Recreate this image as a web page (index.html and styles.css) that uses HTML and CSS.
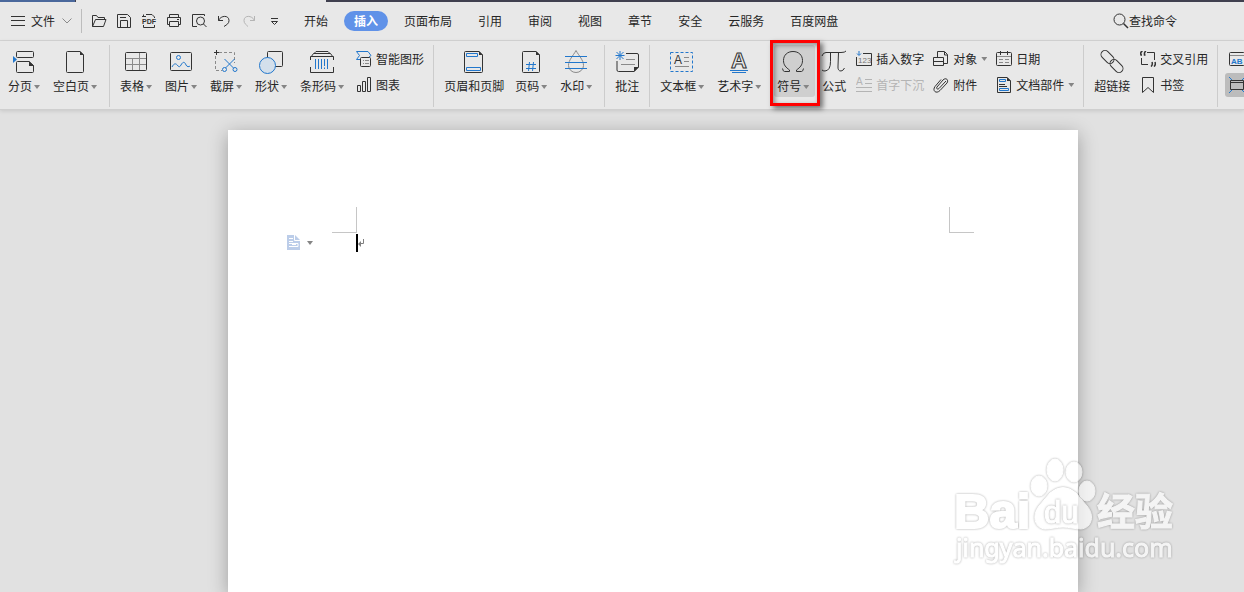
FILE: index.html
```
<!DOCTYPE html>
<html lang="zh-CN">
   <head>
      <meta charset="UTF-8">
      <meta name="viewport" content="width=device-width, initial-scale=1.0"/>
      <title>文字文稿</title>
      <link rel="stylesheet" href="styles.css">
   </head>
   <body>

      <div class="doc-tabs">
         <div class="doc-tab-home"></div>
         <div class="doc-tab-active"></div>
      </div>

      <header class="menu-bar">
         <button class="file-menu">
            <svg width="14" height="12" viewBox="0 0 14 12"><path class="ln" d="M0 1.5h14M0 5.5h14M0 10.5h14"/></svg>
            文件
            <svg class="chevron" width="10" height="6" viewBox="0 0 10 6"><path class="ln gray" d="M.5.5L5 5 9.500.5"/></svg>
         </button>

         <div class="quick-tools">
            <button aria-label="打开"><svg width="16" height="16" viewBox="0 0 16 16"><path class="ln" d="M1.500 13.500V2.500h4l1.500 2h6.500v2M1.500 13.500L4.500 6.500h10.500L12.500 13.500z"/></svg></button>
            <button aria-label="保存"><svg width="16" height="16" viewBox="0 0 16 16"><path class="ln" d="M1.500 1.500h10l3 3v10h-13zM4.500 14V7.500h7V14M4 4.500h6"/></svg></button>
            <button aria-label="输出为PDF"><svg width="16" height="16" viewBox="0 0 16 16"><path class="ln" d="M2.500 4V1.500M1 3.500h4M5 1.500h6l2.500 2.500v1M2.500 12v2.500h11V12"/><text class="glyph" x="1" y="11" font-size="7" font-weight="bold">PDF</text></svg></button>
            <button aria-label="打印"><svg width="16" height="16" viewBox="0 0 16 16"><path class="ln" d="M3.500 4.500v-3h9v3M3.500 11.500h-2v-7h13v7h-2M3.500 8.500h9v5h-9zM11 6.500h2"/></svg></button>
            <button aria-label="打印预览"><svg width="16" height="16" viewBox="0 0 16 16"><path class="ln" d="M13.500 3V1.500h-12v12H6"/><circle class="ln" cx="9.500" cy="8" r="4"/><path class="ln" d="M12.500 11l3 3"/></svg></button>
            <button aria-label="撤销"><svg width="16" height="16" viewBox="0 0 16 16"><path class="ln" d="M2.500 3v4.500H7M2.500 7.500C5 2 13 2 13 7.500c0 3-2 4-5 6"/></svg></button>
            <button aria-label="恢复"><svg width="16" height="16" viewBox="0 0 16 16"><path class="ln pale" d="M13.500 3v4.500H9M13.500 7.500C11 2 3 2 3 7.500c0 3 2 4 4 6"/></svg></button>
            <button aria-label="自定义快速访问工具栏"><svg width="16" height="16" viewBox="0 0 16 16"><path class="ln" d="M5 5.500h7M5.500 8.500l3 3 3-3z"/></svg></button>
         </div>

         <nav class="ribbon-tabs">
            <a href="#">开始</a>
            <a href="#" class="active">插入</a>
            <a href="#">页面布局</a>
            <a href="#">引用</a>
            <a href="#">审阅</a>
            <a href="#">视图</a>
            <a href="#">章节</a>
            <a href="#">安全</a>
            <a href="#">云服务</a>
            <a href="#">百度网盘</a>
         </nav>

         <button class="search">
            <svg width="16" height="16" viewBox="0 0 16 16"><circle class="ln" cx="6.500" cy="6.500" r="5.500"/><path class="ln thick" d="M10.500 10.500l4.500 4.500"/></svg>查找命令
         </button>
      </header>

      <div class="ribbon">
         <div class="group first">
            <button class="big">
               <svg width="26" height="26" viewBox="0 0 26 26"><rect class="ln" x="5.500" y="2.500" width="17" height="6" rx="1"/><path class="ln" d="M18 12.500H6.500q-1 0-1 1v9q0 1 1 1h15q1 0 1-1v-6z"/><path class="ink" d="M18 12l5 5h-5z"/><path class="blue-fill" d="M2 7l4 3.500L2 14z"/></svg>
               <span>分页<i class="arrow"></i></span>
            </button>
            <button class="big">
               <svg width="26" height="26" viewBox="0 0 26 26"><path class="ln" d="M18 2.500H5.500q-1 0-1 1v19q0 1 1 1h15q1 0 1-1V6z"/><path class="ink" d="M18 2l4 4h-4z"/></svg>
               <span>空白页<i class="arrow"></i></span>
            </button>
         </div>

         <div class="group">
            <button class="big">
               <svg width="26" height="26" viewBox="0 0 26 26"><path class="ln gray" d="M3 9.500h20M3 15.500h20M9.500 9.500v12M16.500 4v5M16.500 15.500v6M16.500 9v6"/><rect class="ln" x="2.500" y="3.500" width="21" height="18" rx="1"/></svg>
               <span>表格<i class="arrow"></i></span>
            </button>
            <button class="big">
               <svg width="26" height="26" viewBox="0 0 26 26"><rect class="ln" x="2.500" y="3.500" width="21" height="18" rx="1"/><circle class="ln blue" cx="10.500" cy="8.500" r="2"/><path class="ln blue" d="M4 18c2-4 4-4 6-1 1 1 2 1 3-1 2-4 4-3 5 0 1 2 3 2 4 1"/></svg>
               <span>图片<i class="arrow"></i></span>
            </button>
            <button class="big">
               <svg width="26" height="26" viewBox="0 0 26 26"><path class="ln gray dash" d="M6 3.500h15.500V14M2.500 7v14.500H9"/><path class="ln" d="M3.500 1v5M1 3.500h5"/><path class="ln blue" d="M11.500 10l9 9M21.500 10l-9 9"/><circle class="ln blue" cx="11.500" cy="20.500" r="2"/><circle class="ln blue" cx="22" cy="20.500" r="2"/></svg>
               <span>截屏<i class="arrow"></i></span>
            </button>
            <button class="big">
               <svg width="26" height="26" viewBox="0 0 26 26"><rect class="ln" x="9.500" y="2.500" width="15" height="15" rx="1"/><circle class="ln blue tint" cx="9.500" cy="16.500" r="8"/></svg>
               <span>形状<i class="arrow"></i></span>
            </button>
            <button class="big">
               <svg width="26" height="26" viewBox="0 0 26 26"><path class="ln" d="M2 8l2.500-3.500h17L24 8M5 4.500l2-2h12l2 2M1.500 11V7.500h23V11M1.500 18v5.500h23V18"/><path class="ln blue" d="M6.500 10v10M9.500 10v10M12.500 10v10M15.500 10v7M18.500 10v10M15.500 18.500v1.500"/></svg>
               <span>条形码<i class="arrow"></i></span>
            </button>
            <div class="stack">
               <button class="small">
                  <svg width="16" height="16" viewBox="0 0 16 16"><path class="ln blue" d="M4 8.500H.5L3.500 4.500.5.500H12L15 4.500 13 6"/><rect class="ln" x="4.500" y="6.500" width="10" height="9" rx="1"/><path class="ln gray" d="M7 9.500h1M9 9.500h4M7 12.500h1M9 12.500h4"/></svg>
                  智能图形
               </button>
               <button class="small">
                  <svg width="16" height="16" viewBox="0 0 16 16"><path class="ln" d="M1.500 8.500h3v6h-3zM6.500 4.500h3v10h-3zM11.500 .5h3v14h-3z"/></svg>
                  图表
               </button>
            </div>
         </div>

         <div class="group">
            <button class="big plain">
               <svg width="26" height="26" viewBox="0 0 26 26"><path class="ln" d="M18 2.500H4.500q-1 0-1 1v19q0 1 1 1h16q1 0 1-1V6z"/><path class="ink" d="M18 2l4 4h-4z"/><path class="ln blue" d="M5.500 4.500h11v3h-11zM5.500 18.500h14v3h-14z"/></svg>
               <span>页眉和页脚</span>
            </button>
            <button class="big">
               <svg width="26" height="26" viewBox="0 0 26 26"><path class="ln" d="M18 2.500H5.500q-1 0-1 1v19q0 1 1 1h15q1 0 1-1V6z"/><path class="ink" d="M18 2l4 4h-4z"/><path class="ln blue" d="M8 15.500h10M8 19.500h10M11.500 13l-1 9M15.500 13l-1 9"/></svg>
               <span>页码<i class="arrow"></i></span>
            </button>
            <button class="big">
               <svg width="26" height="26" viewBox="0 0 26 26"><path class="ln gray" d="M13 1.500C10 7 5.500 11 5.500 16.500a7.500 7 0 0 0 15 0C20.500 11 16 7 13 1.500z"/><path class="ln blue" d="M2 7.500h22M2 13.500h22M2 19.500h22"/></svg>
               <span>水印<i class="arrow"></i></span>
            </button>
         </div>

         <div class="group">
            <button class="big plain">
               <svg width="26" height="26" viewBox="0 0 26 26"><path class="ln" d="M12 4.500h11q1.500 0 1.500 1.500v12L20 22.500H4.500q-1.500 0-1.500-1.500V12"/><path class="ink" d="M25 18l-5 5v-5z"/><path class="ln gray" d="M12 10.500h9M7 15.500h14"/><path class="ln blue" d="M6 2v9M1.500 6.500h9M2.500 3l7 7M9.500 3l-7 7"/></svg>
               <span>批注</span>
            </button>
         </div>

         <div class="group">
            <button class="big">
               <svg width="26" height="26" viewBox="0 0 26 26"><rect class="ln blue dash" x="1.500" y="3.500" width="22" height="19"/><text class="glyph" x="5" y="15" font-size="12">A</text><path class="ln gray" d="M15 8.500h5M15 12.500h5M6 17.500h14"/></svg>
               <span>文本框<i class="arrow"></i></span>
            </button>
            <button class="big">
               <svg width="26" height="26" viewBox="0 0 26 26"><text class="outline" x="13" y="19" font-size="22" text-anchor="middle">A</text><path class="ln blue" d="M4 21.500h18M6 23.500h14"/></svg>
               <span>艺术字<i class="arrow"></i></span>
            </button>
            <div class="callout">
               <button class="big">
                  <svg width="26" height="26" viewBox="0 0 26 26"><path class="ln" d="M2.500 19.500q.5 3 2 3h5V21C6 18.500 3.500 16 3.500 11.500 3.500 6 7.500 2.500 13 2.500s9.500 3.500 9.500 9c0 4.500-2.500 7-6 9.500v1.500h5q1.500 0 2-3"/></svg>
                  <span>符号<i class="arrow"></i></span>
               </button>
            </div>
            <button class="big plain">
               <svg width="26" height="26" viewBox="0 0 26 26"><path class="ln" d="M1 7q1-3.500 4-3.500h15q4 0 5-1.500M9.500 3.500v9q0 9-5.500 9.500-2 0-3-1M17.500 3.500L17 17q-.5 5 3 5 2 0 3.500-3"/></svg>
               <span>公式</span>
            </button>
            <div class="stack">
               <button class="small">
                  <svg width="16" height="16" viewBox="0 0 16 16"><path class="ln" d="M7 2.500h8.500v12H.5V6"/><text class="glyph gray-text" x="2" y="12" font-size="8">123</text><path class="ln blue" d="M3 0v4M1 2.500l2 2 2-2"/></svg>
                  插入数字
               </button>
               <button class="small" disabled>
                  <svg width="16" height="16" viewBox="0 0 16 16"><text class="glyph pale-text" x="0" y="8" font-size="10">A</text><path class="ln pale" d="M9 2.500h7M9 6.500h7M0 10.500h16M0 14.500h16"/></svg>
                  首字下沉
               </button>
            </div>
            <div class="stack">
               <button class="small">
                  <svg width="16" height="16" viewBox="0 0 16 16"><path class="ln" d="M4.500 6V.5h7l3 3v9H11M.5 6.500h10v8H.5zM.5 10.500h10M11.500 1v3h3"/></svg>
                  对象<i class="arrow"></i>
               </button>
               <button class="small">
                  <svg width="16" height="16" viewBox="0 0 16 16"><path class="ln" d="M13 4L6 11.500c-2 1.500-3-.5-2-1.500l6-7c3-3 6 0 4 3l-7 7.500c-4 4-8 0-5-4l6-7"/></svg>
                  附件
               </button>
            </div>
            <div class="stack">
               <button class="small">
                  <svg width="16" height="16" viewBox="0 0 16 16"><rect class="ln" x=".5" y="1.500" width="15" height="13" rx="1"/><path class="ln" d="M4.500 0v4M11.500 0v4"/><path class="ln gray" d="M3 8.500h4M9 8.500h4M3 11.500h4M9 11.500h4M1 5.500h14"/></svg>
                  日期
               </button>
               <button class="small">
                  <svg width="16" height="16" viewBox="0 0 16 16"><path class="ln" d="M11 .5H1.500v15h13V4zM3 7.500h6M3 9.500h8"/><path class="ink" d="M11 0l4 4h-4z"/><path class="ln blue" d="M3.500 2.500h6v2h-6zM3.500 11.500h9v2h-9z"/></svg>
                  文档部件<i class="arrow"></i>
               </button>
            </div>
         </div>

         <div class="group">
            <button class="big plain">
               <svg width="26" height="26" viewBox="0 0 26 26"><rect class="ln" x="-7.500" y="-4" width="15" height="8" rx="4" transform="translate(8.500 8) rotate(45)"/><rect class="ln" x="-7.500" y="-4" width="15" height="8" rx="4" transform="translate(17.500 17) rotate(45)"/></svg>
               <span>超链接</span>
            </button>
            <div class="stack">
               <button class="small">
                  <svg width="16" height="16" viewBox="0 0 16 16"><path class="ln" d="M7 1.500h7.500V9M1.500 7v6.500H8"/><path class="ln thick" d="M2.500 0Q0 1 1 4h1M6 0Q4 1 4.500 4h1M12 11q1 3-1 4.500M15 11q1 3-1 4.500"/></svg>
                  交叉引用
               </button>
               <button class="small">
                  <svg width="16" height="16" viewBox="0 0 16 16"><path class="ln" d="M2.500.5h11v15L8 10.500l-5.500 5z"/></svg>
                  书签
               </button>
            </div>
         </div>

         <div class="group">
            <div class="stack toggles">
               <button class="toggle" aria-label="域">
                  <svg width="16" height="16" viewBox="0 0 16 16"><rect class="ln" x=".5" y="1.500" width="15" height="13" rx="1"/><path class="ln gray" d="M1 4.500h14"/><text class="glyph blue-text" x="2" y="13" font-size="8" font-weight="bold">AB</text></svg>
               </button>
               <button class="toggle on" aria-label="窗体底纹">
                  <svg width="16" height="16" viewBox="0 0 16 16"><path class="ln blue" d="M0 0l3 3M16 0l-3 3M0 16l3-3M16 16l-3-3"/><path class="ln" d="M1.500 3.500h13v9h-13zM1.500 5.500h13"/></svg>
               </button>
            </div>
         </div>
      </div>

      <main class="workspace">
         <div class="page">
            <div class="crop-marks">
               <div class="crop crop-left"></div>
               <div class="crop crop-right"></div>
            </div>
            <div class="line">
               <svg width="13" height="16" viewBox="0 0 13 16"><path fill="#bccde9" d="M0 0h8l5 5v10H0z"/><path fill="none" stroke="#fff" d="M7.500 0v5.500H13M2 3.500h4M2 6.500h4M2 8.500h9v3H4M2 11.500h2M5 9.500h4"/></svg>
               <i class="arrow"></i>
               <div class="caret"></div>
               <svg width="7" height="8" viewBox="0 0 7 8"><path fill="#808080" d="M0 5l3-3v6z"/><path fill="none" stroke="#808080" d="M5.500 0v4.500H2"/></svg>
            </div>
         </div>
      </main>

      <svg class="watermark" width="226" height="112" viewBox="0 0 226 112">
         <text class="wm wm-bold" x="2" y="72" font-size="49">Bai</text>
         <g class="wm">
            <ellipse cx="87" cy="30" rx="8" ry="10"/>
            <ellipse cx="103" cy="14" rx="8" ry="11"/>
            <ellipse cx="122" cy="16" rx="8" ry="10"/>
            <ellipse cx="135" cy="35" rx="8" ry="10"/>
            <path d="M98 37q13-11 26 0l11 13c8 9 5 22-6 23-6 0-12-2-18-2s-12 2-18 2c-11-1-13-14-6-23z"/>
         </g>
         <text class="wm wm-du" x="92" y="67" font-size="31">du</text>
         <text class="wm wm-cjk" x="145" y="69" font-size="38">经验</text>
         <text class="wm wm-url" x="4" y="101" font-size="25">jingyan.baidu.com</text>
      </svg>

   </body>
</html>
```
FILE: styles.css
```
*
{
   box-sizing: border-box;
}

body
{
   display: flex;
   flex-direction: column;
   position: relative;
   height: 100vh;
   margin: 0;
   overflow: hidden;
   background: #e1e1e1;
   color: #262626;
   font-family: "Noto Sans CJK SC", sans-serif;
   font-size: 12px;
   line-height: 16px;
}

button
{
   display: flex;
   align-items: center;
   flex: none;
   padding: 0;
   border: 0;
   background: none;
   color: inherit;
   font: inherit;
   white-space: nowrap;
}

button:disabled
{
   color: #b4b4b4;
}

svg
{
   display: block;
   flex: none;
}

/* icon strokes */

.ln
{
   fill: none;
   stroke: #333333;
}

.ln.blue
{
   stroke: #2277cc;
}

.ln.gray
{
   stroke: #8a8a8a;
}

.ln.pale
{
   stroke: #b4b4b4;
}

.ln.thick
{
   stroke-width: 1.5;
}

.ln.dash
{
   stroke-dasharray: 3 2;
}

.ln.tint
{
   fill: #d3dfeb;
}

.ink
{
   fill: #333333;
}

.blue-fill
{
   fill: #2277cc;
}

.glyph
{
   fill: #333333;
   font-family: "Liberation Sans", sans-serif;
}

.gray-text
{
   fill: #777777;
}

.pale-text
{
   fill: #b4b4b4;
}

.blue-text
{
   fill: #2277cc;
}

.outline
{
   fill: none;
   stroke: #333333;
   font-family: "Liberation Sans", sans-serif;
   font-weight: bold;
}

.arrow
{
   display: inline-block;
   flex: none;
   width: 6px;
   height: 4px;
   background: #858585;
   clip-path: polygon(0 0, 100% 0, 50% 100%);
}

/* window top */

.doc-tabs
{
   display: flex;
   flex: none;
   height: 2px;
   background: #40404f;
}

.doc-tab-home
{
   width: 75px;
   background: #4a689c;
}

.doc-tab-active
{
   width: 250px;
   margin-left: 1px;
   background: #e8e8e8;
}

.menu-bar
{
   display: flex;
   align-items: center;
   flex: none;
   height: 39px;
   padding-left: 11px;
   border-bottom: 1px solid #d5d5d5;
   background: #e8e8e8;
}

.file-menu
{
   gap: 6px;
   height: 24px;
   padding-right: 9px;
   border-right: 1px solid #bcbcbc;
}

.chevron
{
   margin-left: 1px;
}

.quick-tools
{
   display: flex;
   flex: none;
   margin-left: 4px;
}

.quick-tools button
{
   justify-content: center;
   width: 25px;
   height: 24px;
}

.ribbon-tabs
{
   display: flex;
   flex: none;
   margin-left: 5px;
}

.ribbon-tabs a
{
   margin: 0 3px;
   padding: 2px 10px;
   border-radius: 10px;
   color: inherit;
   text-decoration: none;
}

.ribbon-tabs .active
{
   background: #6092e8;
   color: #ffffff;
   font-weight: bold;
}

.search
{
   margin-left: auto;
   margin-right: 67px;
}

/* ribbon */

.ribbon
{
   display: flex;
   flex: none;
   height: 69px;
   padding: 4px 0 2px;
   border-bottom: 1px solid #cfcfcf;
   background: #e8e8e8;
   box-shadow: 0 1px 4px rgba(0, 0, 0, 0.12);
}

.group
{
   display: flex;
   align-items: flex-start;
   flex: none;
   padding: 0 6px 0 3px;
   border-right: 1px solid #cccccc;
}

.group.first
{
   padding-left: 1px;
}

.group:last-child
{
   border-right: 0;
}

.big
{
   flex-direction: column;
   gap: 3px;
   height: 52px;
   padding: 4px 6px 0 7px;
}

.big.plain
{
   padding-right: 4px;
}

.big.plain svg
{
   margin: 0 -1px;
}

.big .arrow
{
   margin-left: 2px;
   vertical-align: 2px;
}

.stack
{
   display: flex;
   flex-direction: column;
   gap: 2px;
   padding: 2px 3px 0 6px;
}

.small
{
   gap: 4px;
   height: 24px;
}

.toggles
{
   padding-left: 4px;
}

.toggle
{
   width: 24px;
   height: 24px;
   padding: 4px;
   border-radius: 3px;
}

.toggle.on
{
   background: #bcbcbc;
}

.callout
{
   position: relative;
   margin-left: 7px;
}

.callout .big
{
   padding-left: 3px;
   border-radius: 3px;
   background: #cfcfcf;
}

.callout::after
{
   content: "";
   position: absolute;
   inset: -5px -5px -9px -4px;
   border: 3px solid #ff0000;
   box-shadow: 3px 3px 5px rgba(0, 0, 0, 0.5), inset 2px 2px 5px rgba(0, 0, 0, 0.4);
}

/* document */

.workspace
{
   display: flex;
   flex: 1;
   padding: 20px 20px 0 228px;
}

.page
{
   flex: 1;
   max-width: 850px;
   padding-top: 77px;
   background: #ffffff;
   box-shadow: 0 4px 18px rgba(0, 0, 0, 0.3);
}

.crop-marks
{
   display: flex;
   justify-content: space-between;
   padding: 0 104px;
}

.crop
{
   width: 25px;
   height: 26px;
   border-bottom: 1px solid #c6c6c6;
}

.crop-left
{
   border-right: 1px solid #c6c6c6;
}

.crop-right
{
   border-left: 1px solid #c6c6c6;
}

.line
{
   display: flex;
   align-items: center;
   margin-top: 1px;
   padding-left: 59px;
}

.line .arrow
{
   margin-left: 7px;
}

.caret
{
   width: 2px;
   height: 18px;
   margin-left: 43px;
   background: #000000;
}

/* site watermark, floats over the document */

.watermark
{
   position: absolute;
   right: 66px;
   bottom: 24px;
   overflow: visible;
   opacity: 0.65;
}

.wm
{
   fill: #ffffff;
   stroke: #ffffff;
   filter: drop-shadow(0 0 1px rgba(0, 0, 0, 0.5));
}

.wm-bold
{
   font-family: "Liberation Sans", sans-serif;
   font-weight: bold;
   stroke-width: 2;
}

.wm-du
{
   font-family: "Liberation Sans", sans-serif;
}

.wm-cjk
{
   font-family: "Noto Sans CJK SC", sans-serif;
   font-weight: bold;
}

.wm-url
{
   font-family: "Noto Sans", sans-serif;
}
```
